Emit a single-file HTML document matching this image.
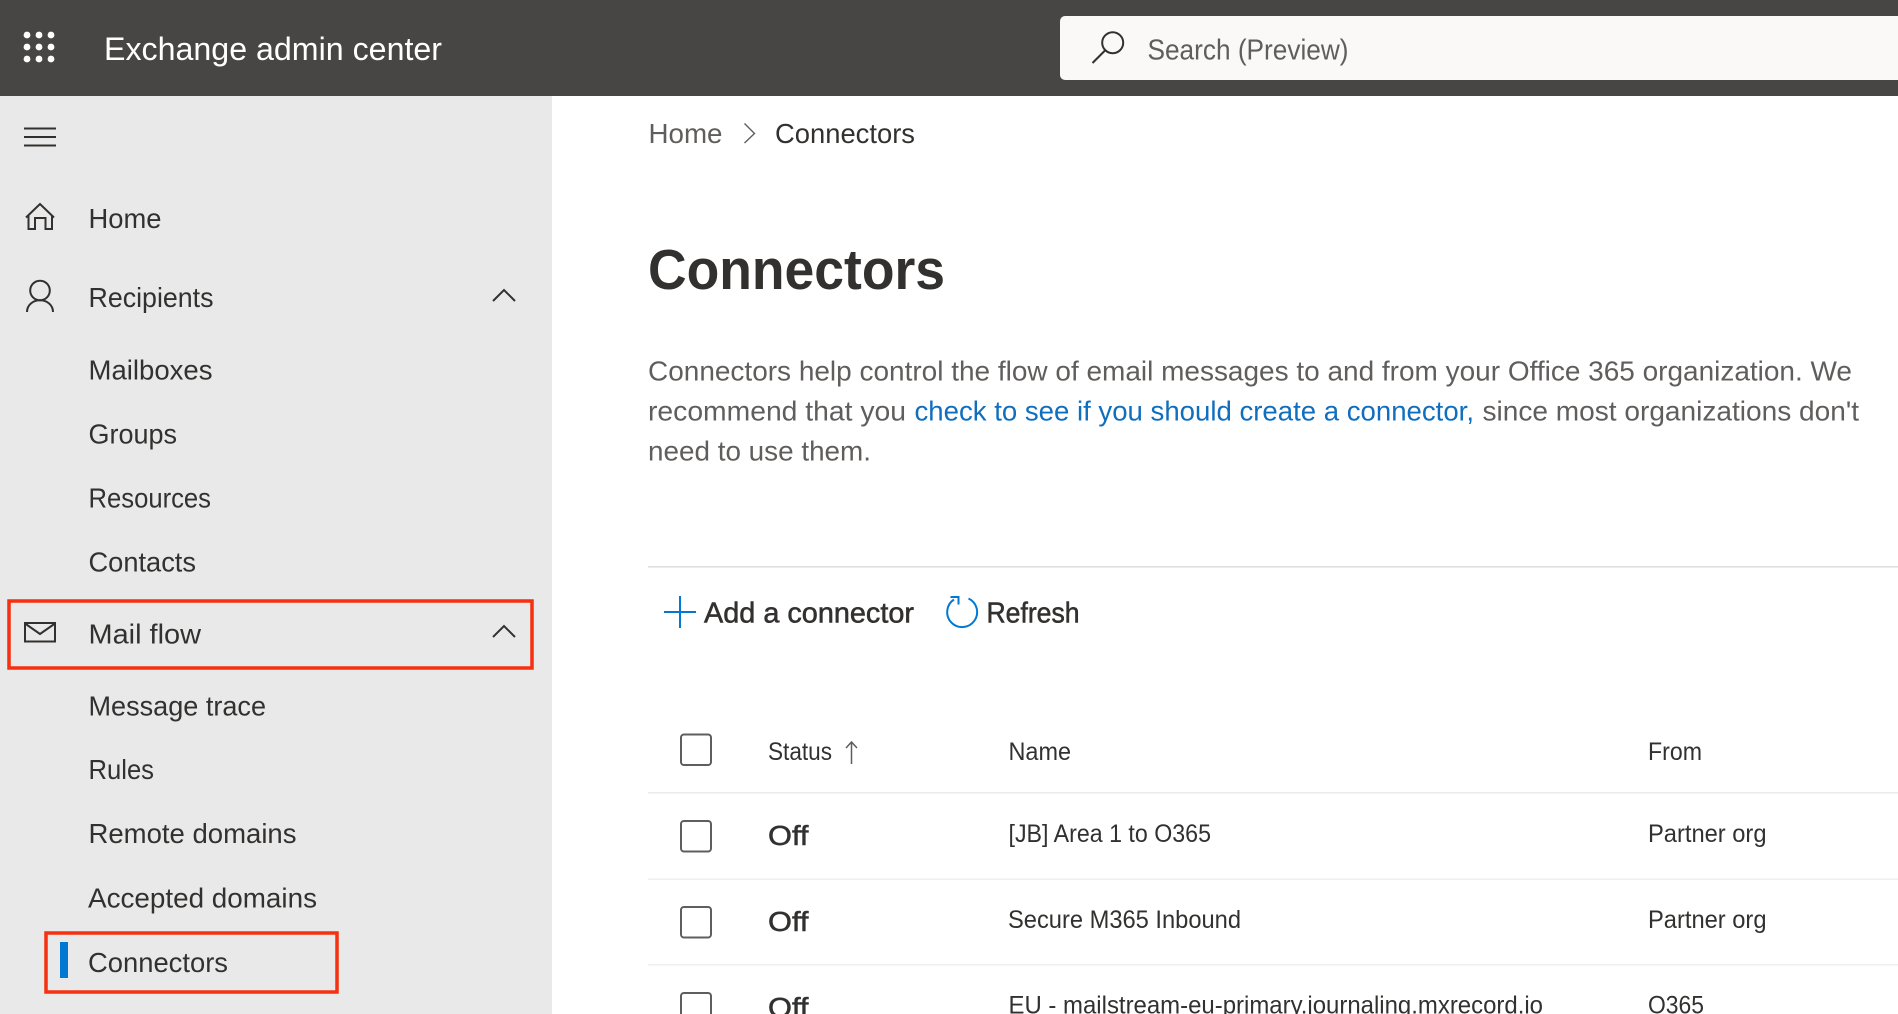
<!DOCTYPE html>
<html lang="en">
<head>
<meta charset="utf-8">
<title>Exchange admin center - Connectors</title>
<style>
html,body{margin:0;padding:0;background:#fff;width:1898px;height:1014px;overflow:hidden}
svg{display:block}
text{font-family:"Liberation Sans",sans-serif;fill:#323130;white-space:pre}
.n{font-size:28px}
.p{font-size:28px;fill:#605e5c}
.t{font-size:25px}
.semi{stroke:#323130;stroke-width:.55px}
.ic{fill:none;stroke:#323130;stroke-width:2}
.cb{fill:none;stroke:#605e5c;stroke-width:2}
</style>
</head>
<body>
<svg width="1898" height="1014" viewBox="0 0 1898 1014" xmlns="http://www.w3.org/2000/svg">
<rect width="1898" height="1014" fill="#fff"/>
<!-- header -->
<rect width="1898" height="96" fill="#484644"/>
<g fill="#fff">
<circle cx="27" cy="35" r="3.400"/><circle cx="39" cy="35" r="3.400"/><circle cx="51" cy="35" r="3.400"/>
<circle cx="27" cy="47" r="3.400"/><circle cx="39" cy="47" r="3.400"/><circle cx="51" cy="47" r="3.400"/>
<circle cx="27" cy="59" r="3.400"/><circle cx="39" cy="59" r="3.400"/><circle cx="51" cy="59" r="3.400"/>
</g>
<text x="104" y="60" font-size="32" style="fill:#fff" textLength="338" lengthAdjust="spacingAndGlyphs">Exchange admin center</text>
<rect x="1060" y="16" width="860" height="64" rx="5" fill="#faf9f8"/>
<circle cx="1112.700" cy="42.700" r="10.500" class="ic"/>
<path d="M1105 50.500L1092.500 63" class="ic"/>
<text x="1147.500" y="59.500" font-size="29" style="fill:#605e5c" textLength="201" lengthAdjust="spacingAndGlyphs">Search (Preview)</text>

<!-- sidebar -->
<rect x="0" y="96" width="552" height="918" fill="#e9e9e9"/>
<path d="M24 128.500H56M24 137H56M24 145.500H56" class="ic"/>
<path d="M26 217.500L40 204L54 217.500M28.500 215V229H35V218H45.500V229H52V215" class="ic"/>
<text class="n" x="88.500" y="228" textLength="73" lengthAdjust="spacingAndGlyphs">Home</text>
<circle cx="40" cy="290.500" r="9.800" class="ic"/>
<path d="M27 312C27 305 33 300.300 40 300.300C47 300.300 53 305 53 312" class="ic"/>
<text class="n" x="88.500" y="307" textLength="125" lengthAdjust="spacingAndGlyphs">Recipients</text>
<path d="M493 301L504 290L515 301" class="ic"/>
<text class="n" x="88.500" y="379.500" textLength="124" lengthAdjust="spacingAndGlyphs">Mailboxes</text>
<text class="n" x="88.500" y="443.500" textLength="88.500" lengthAdjust="spacingAndGlyphs">Groups</text>
<text class="n" x="88.500" y="507.500" textLength="122.500" lengthAdjust="spacingAndGlyphs">Resources</text>
<text class="n" x="88.500" y="571.500" textLength="107.500" lengthAdjust="spacingAndGlyphs">Contacts</text>
<rect x="25" y="623" width="30" height="18.500" class="ic"/>
<path d="M25 623.500L40 634L55 623.500" class="ic"/>
<text class="n" x="88.500" y="643.500" textLength="112.500" lengthAdjust="spacingAndGlyphs">Mail flow</text>
<path d="M493 637L504 626L515 637" class="ic"/>
<text class="n" x="88.500" y="715.500" textLength="177.500" lengthAdjust="spacingAndGlyphs">Message trace</text>
<text class="n" x="88.500" y="779" textLength="65.500" lengthAdjust="spacingAndGlyphs">Rules</text>
<text class="n" x="88.500" y="843" textLength="208" lengthAdjust="spacingAndGlyphs">Remote domains</text>
<text class="n" x="88" y="907.300" textLength="229" lengthAdjust="spacingAndGlyphs">Accepted domains</text>
<rect x="60" y="942" width="8" height="36" fill="#0078d4"/>
<text class="n" x="88" y="972" textLength="140" lengthAdjust="spacingAndGlyphs">Connectors</text>
<rect x="9" y="601" width="523" height="67" fill="none" stroke="#f5310f" stroke-width="3.500"/>
<rect x="46" y="933" width="291" height="59" fill="none" stroke="#f5310f" stroke-width="3.500"/>

<!-- breadcrumb -->
<text class="p" x="648.500" y="143" textLength="74" lengthAdjust="spacingAndGlyphs">Home</text>
<path d="M744.500 123.500L754.500 133.500L744.500 143" fill="none" stroke="#605e5c" stroke-width="1.400"/>
<text class="n" x="775" y="143" textLength="140" lengthAdjust="spacingAndGlyphs">Connectors</text>

<!-- title -->
<text x="648" y="289" font-size="57" font-weight="700" textLength="297" lengthAdjust="spacingAndGlyphs">Connectors</text>

<!-- paragraph -->
<text class="p" x="648" y="380.700" textLength="1204" lengthAdjust="spacingAndGlyphs">Connectors help control the flow of email messages to and from your Office 365 organization. We</text>
<text class="p" x="648" y="420.700" textLength="258" lengthAdjust="spacingAndGlyphs">recommend that you</text>
<text x="914.500" y="420.700" font-size="28" style="fill:#106ebe" textLength="559.500" lengthAdjust="spacingAndGlyphs">check to see if you should create a connector,</text>
<text class="p" x="1482.500" y="420.700" textLength="376.500" lengthAdjust="spacingAndGlyphs">since most organizations don't</text>
<text class="p" x="648" y="460.500" textLength="223" lengthAdjust="spacingAndGlyphs">need to use them.</text>

<!-- toolbar -->
<rect x="648" y="566" width="1250" height="1.600" fill="#e1dfdd"/>
<path d="M664 612H696M680 596V628" fill="none" stroke="#0078d4" stroke-width="2"/>
<text class="semi" x="704" y="622.700" font-size="29" textLength="210" lengthAdjust="spacingAndGlyphs">Add a connector</text>
<path d="M968.500 598.500A15 15 0 1 1 954 599.500" fill="none" stroke="#0078d4" stroke-width="2"/>
<path d="M950.500 597H958.500V604.500" fill="none" stroke="#0078d4" stroke-width="2"/>
<text class="semi" x="986.500" y="622.700" font-size="29" textLength="93" lengthAdjust="spacingAndGlyphs">Refresh</text>

<!-- table -->
<rect x="681" y="734.500" width="30" height="30.500" rx="3" class="cb"/>
<text class="t" x="768" y="760" textLength="64" lengthAdjust="spacingAndGlyphs">Status</text>
<path d="M851.500 764V742M846 748L851.500 742L857 748" fill="none" stroke="#605e5c" stroke-width="1.500"/>
<text class="t" x="1008.500" y="760" textLength="62.500" lengthAdjust="spacingAndGlyphs">Name</text>
<text class="t" x="1648" y="760" textLength="54" lengthAdjust="spacingAndGlyphs">From</text>
<rect x="648" y="792" width="1250" height="1.600" fill="#edebe9"/>

<rect x="681" y="821" width="30" height="30.500" rx="3" class="cb"/>
<text class="semi" x="768" y="845" font-size="28" textLength="40.500" lengthAdjust="spacingAndGlyphs">Off</text>
<text class="t" x="1008.500" y="842" textLength="202.500" lengthAdjust="spacingAndGlyphs">[JB] Area 1 to O365</text>
<text class="t" x="1648" y="842" textLength="118.500" lengthAdjust="spacingAndGlyphs">Partner org</text>
<rect x="648" y="878.400" width="1250" height="1.600" fill="#f0efee"/>

<rect x="681" y="907" width="30" height="30.500" rx="3" class="cb"/>
<text class="semi" x="768" y="931" font-size="28" textLength="40.500" lengthAdjust="spacingAndGlyphs">Off</text>
<text class="t" x="1008" y="928" textLength="233" lengthAdjust="spacingAndGlyphs">Secure M365 Inbound</text>
<text class="t" x="1648" y="928" textLength="118.500" lengthAdjust="spacingAndGlyphs">Partner org</text>
<rect x="648" y="964" width="1250" height="1.600" fill="#f0efee"/>

<rect x="681" y="993" width="30" height="30.500" rx="3" class="cb"/>
<text class="semi" x="768" y="1017" font-size="28" textLength="40.500" lengthAdjust="spacingAndGlyphs">Off</text>
<text class="t" x="1008.500" y="1013.500" textLength="534.500" lengthAdjust="spacingAndGlyphs">EU - mailstream-eu-primary.journaling.mxrecord.io</text>
<text class="t" x="1648" y="1013.500" textLength="56" lengthAdjust="spacingAndGlyphs">O365</text>
</svg>
</body>
</html>
